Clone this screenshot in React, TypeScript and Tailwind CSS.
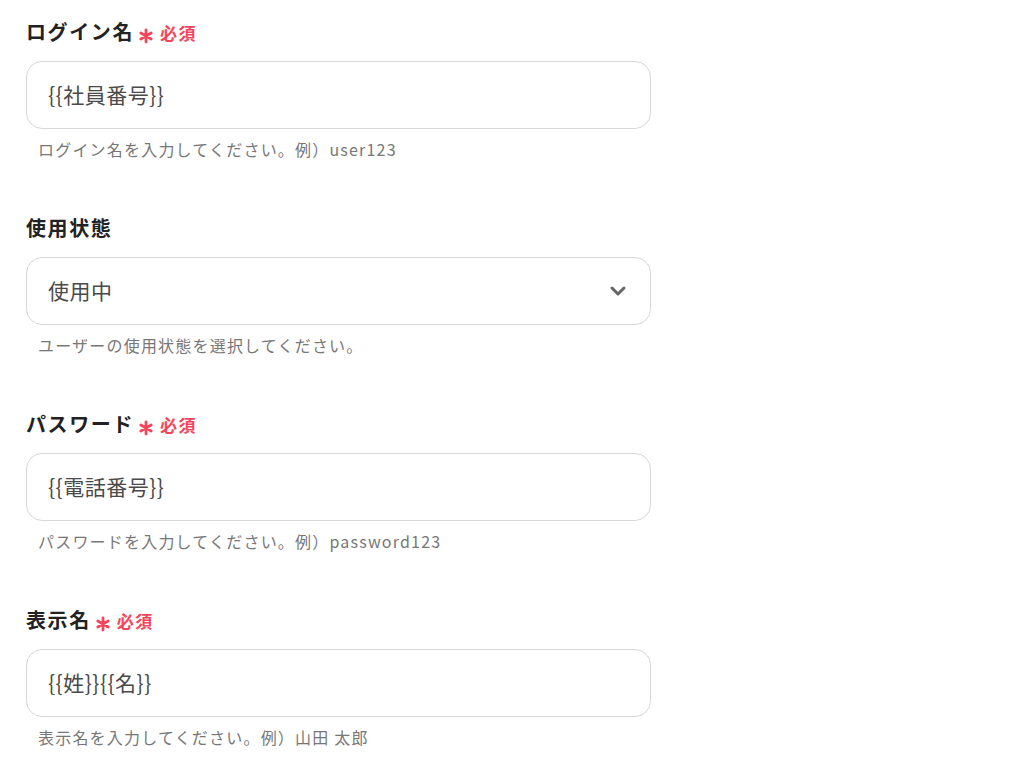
import { ChevronDown } from 'lucide-react'

const font = { fontFamily: '"Noto Sans CJK JP", "Noto Sans", sans-serif' }

function Asterisk() {
  return (
    <svg viewBox="0 0 16 16" className="w-[16px] h-[16px] mt-[8px]" fill="none" stroke="#f5455c" strokeWidth={2.8} strokeLinecap="round">
      <path d="M8 2v12M2.8 5l10.4 6M2.8 11l10.4-6" />
    </svg>
  )
}

function Label({ text, required }: { text: string; required?: boolean }) {
  return (
    <div className="flex items-center h-[28px]">
      <span className="text-[20px] tracking-[1.6px] font-bold text-[#222]">{text}</span>
      {required && (
        <span className="ml-[4px] flex items-center text-[#f5455c] font-bold">
          <Asterisk />
          <span className="ml-[6px] text-[17px] tracking-[1.5px] mt-[2px]">必須</span>
        </span>
      )}
    </div>
  )
}

function Field({
  label,
  required,
  value,
  help,
  select,
}: {
  label: string
  required?: boolean
  value: string
  help: string
  select?: boolean
}) {
  return (
    <div>
      <Label text={label} required={required} />
      <div className="mt-[15px] h-[68px] w-[625px] rounded-[16px] border border-[#d5d7db] bg-white flex items-center justify-between pl-[21px] pr-[20px]">
        <span className="text-[21px] tracking-[0.5px] text-[#4a4a4a]">{value}</span>
        {select && <ChevronDown className="w-[24px] h-[24px] text-[#666]" strokeWidth={3} />}
      </div>
      <p className="mt-[10px] ml-[12px] text-[16px] tracking-[1.2px] leading-[20px] text-[#777]">{help}</p>
    </div>
  )
}

export default function App() {
  return (
    <div className="min-h-screen bg-white pl-[26px] pt-[18px]" style={font}>
      <div className="flex flex-col gap-[55px]">
        <Field
          label="ログイン名"
          required
          value="{{社員番号}}"
          help="ログイン名を入力してください。例）user123"
        />
        <Field
          label="使用状態"
          value="使用中"
          help="ユーザーの使用状態を選択してください。"
          select
        />
        <Field
          label="パスワード"
          required
          value="{{電話番号}}"
          help="パスワードを入力してください。例）password123"
        />
        <Field
          label="表示名"
          required
          value="{{姓}}{{名}}"
          help="表示名を入力してください。例）山田 太郎"
        />
      </div>
    </div>
  )
}
